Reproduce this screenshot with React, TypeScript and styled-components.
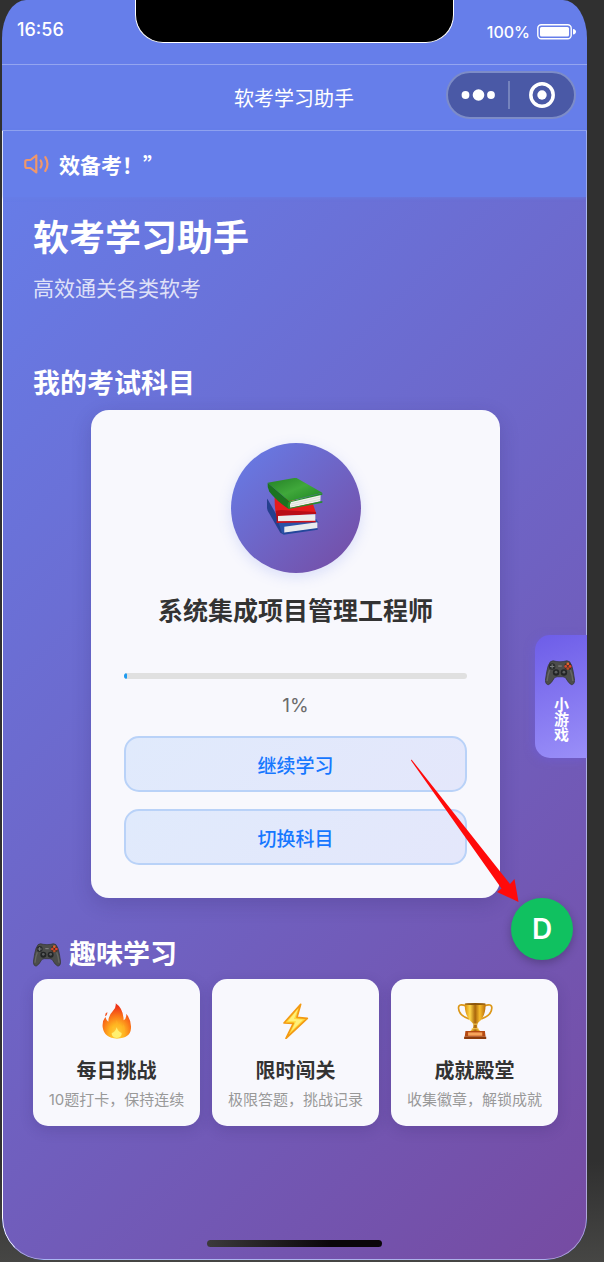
import React from "react";
import styled, { createGlobalStyle } from "styled-components";

const GlobalStyle = createGlobalStyle`
  * { box-sizing: border-box; }
  body {
    margin: 0;
    background: #303030;
    font-family: Inter, "Noto Sans CJK SC", sans-serif;
    color: #fff;
  }
  button { font: inherit; color: inherit; border: 0; padding: 0; background: none; cursor: pointer; }
  h1, h2, h3, p { margin: 0; }
  svg { display: block; }
`;

const Desk = styled.div`
  display: flex;
  min-height: 100vh;
  padding: 0 17px 2px 2px;
  background: linear-gradient(#303030 92%, #464644);
`;

const Phone = styled.div`
  position: relative;
  flex: 1;
  display: flex;
  flex-direction: column;
  overflow: hidden;
  background: #667eea;
  border-radius: 24px 24px 42px 42px / 38px 38px 42px 42px;
`;

const StatusBar = styled.header`
  display: grid;
  grid-template-columns: 1fr 54.4% 1fr;
  height: 65px;
  border-bottom: 1px solid rgba(255, 255, 255, 0.3);
`;

const Clock = styled.time`
  padding: 19px 0 0 15px;
  font-size: 18px;
  line-height: 22px;
  font-weight: 500;
`;

const Notch = styled.div`
  height: 43px;
  background: #000;
  border: 1px solid #fff;
  border-top: 0;
  border-radius: 0 0 28px 28px;
`;

const Battery = styled.div`
  display: flex;
  justify-content: flex-end;
  gap: 7px;
  padding: 21px 10px 0 0;
  font-size: 16px;
  line-height: 22px;
  font-weight: 500;
`;

const NavBar = styled.nav`
  display: grid;
  grid-template-columns: 1fr auto 1fr;
  align-items: center;
  height: 66px;
  padding: 0 11px 0 10px;
  border-bottom: 1px solid rgba(255, 255, 255, 0.3);
`;

const NavTitle = styled.span`
  grid-column: 2;
  padding-top: 2px;
  font-size: 20px;
  line-height: 28px;
`;

const Capsule = styled.div`
  justify-self: end;
  display: flex;
  align-items: center;
  width: 130px;
  height: 48px;
  margin-bottom: 6px;
  padding-right: 2px;
  border: 2px solid #7d8cc8;
  border-radius: 24px;
  background: #4a59a6;
`;

const CapsuleButton = styled.button`
  flex: 1;
  display: flex;
  justify-content: center;
  & + & { position: relative; padding-left: 4px; }
  & + &::before {
    content: "";
    position: absolute;
    left: 0;
    top: 0;
    bottom: 0;
    width: 2px;
    background: #7583bd;
  }
`;

const Screen = styled.main`
  flex: 1;
  display: flex;
  flex-direction: column;
  border: 1px solid rgba(255, 255, 255, 0.45);
  border-left-color: #fff;
  border-top: 0;
  border-radius: 0 0 42px 42px;
  background: linear-gradient(135deg, #667eea, #764ba2);
`;

const Notice = styled.div`
  display: flex;
  align-items: center;
  gap: 9px;
  height: 66px;
  padding: 0 21px;
  background: #667eea;
  box-shadow: 0 1px 3px rgba(102, 126, 234, 0.6);
  font-family: "Noto Sans CJK SC", sans-serif;
  font-size: 21px;
  line-height: 30px;
  font-weight: 700;
`;

const Content = styled.div`
  padding: 16px 28px 40px 30px;
`;

const Title = styled.h1`
  font-size: 36px;
  line-height: 50px;
  font-weight: 700;
`;

const Subtitle = styled.p`
  margin-top: 11px;
  font-size: 21px;
  line-height: 30px;
  color: rgba(255, 255, 255, 0.8);
`;

const SectionTitle = styled.h2<{ $gap: number }>`
  display: flex;
  align-items: center;
  gap: 8px;
  margin-top: ${(p) => p.$gap}px;
  font-size: 27px;
  line-height: 36px;
  font-weight: 700;
`;

const SubjectCard = styled.section`
  width: 78%;
  margin: 8px auto 0;
  padding: 33px;
  border-radius: 18px;
  background: #f8f8fd;
  box-shadow: 0 6px 20px rgba(40, 30, 90, 0.2);
  text-align: center;
`;

const Emblem = styled.div`
  display: flex;
  align-items: center;
  justify-content: center;
  width: 130px;
  height: 130px;
  margin: 0 auto;
  border-radius: 50%;
  background: linear-gradient(135deg, #667eea, #764ba2);
  box-shadow: 0 4px 14px rgba(102, 126, 234, 0.2);
`;

const SubjectName = styled.h3`
  margin-top: 20px;
  font-size: 25px;
  line-height: 36px;
  font-weight: 700;
  color: #333;
  white-space: nowrap;
`;

const Track = styled.div`
  height: 6px;
  margin-top: 44px;
  border-radius: 3px;
  background: #e0e0e0;
  overflow: hidden;
`;

const Fill = styled.div`
  height: 100%;
  border-radius: 3px;
  background: #1e9bf0;
`;

const Percent = styled.p`
  margin-top: 14px;
  font-size: 19px;
  line-height: 26px;
  color: #6b6b6b;
`;

const Action = styled.button`
  display: block;
  width: 100%;
  height: 56px;
  margin-top: 17px;
  padding-top: 6px;
  border: 2px solid #b9d2f8;
  border-radius: 15px;
  background: linear-gradient(135deg, #e0eafc, #e4e7fb);
  font-size: 19px;
  line-height: 28px;
  font-weight: 500;
  color: #1677ff;
`;

const Games = styled.div`
  display: grid;
  grid-template-columns: repeat(3, 1fr);
  gap: 12px;
  margin-top: 6px;
`;

const GameCard = styled.button`
  display: flex;
  flex-direction: column;
  align-items: center;
  padding: 24px 0 16px;
  border-radius: 15px;
  background: #f8f8fd;
  box-shadow: 0 4px 14px rgba(40, 30, 90, 0.18);
  white-space: nowrap;
`;

const GameName = styled.span`
  margin-top: 18px;
  font-size: 20px;
  line-height: 28px;
  font-weight: 700;
  color: #333;
`;

const GameNote = styled.span`
  margin-top: 5px;
  font-size: 15px;
  line-height: 20px;
  color: #999;
`;

const HomeIndicator = styled.div`
  width: 30%;
  height: 7px;
  margin: auto auto 12px;
  border-radius: 4px;
  background: linear-gradient(90deg, #3c3a3c, #0a060a 70%);
`;

const SideTab = styled.button`
  position: absolute;
  right: 0;
  top: 635px;
  display: flex;
  flex-direction: column;
  align-items: center;
  gap: 11px;
  width: 52px;
  height: 123px;
  padding: 25px 2px 0 0;
  border-radius: 15px 0 0 15px;
  background: linear-gradient(160deg, #6d5de8, #9a8ff8);
  box-shadow: -2px 2px 10px rgba(108, 92, 231, 0.4);
  font-size: 15px;
  line-height: 18px;
  font-weight: 700;
`;

const Vertical = styled.span`
  writing-mode: vertical-rl;
`;

const DebugButton = styled.button`
  position: absolute;
  right: 14px;
  top: 898px;
  width: 62px;
  height: 62px;
  border-radius: 50%;
  background: #10c160;
  box-shadow: 0 3px 10px rgba(0, 0, 0, 0.25);
  font-size: 28px;
  line-height: 62px;
  font-weight: 600;
`;

const Arrow = styled.svg`
  position: absolute;
  right: 68px;
  top: 759px;
  pointer-events: none;
`;

const Speaker = () => (
  <svg width="26" height="20" viewBox="0 0 26 20" fill="none" stroke="#f0976a" strokeWidth="2.200" strokeLinecap="round" strokeLinejoin="round">
    <path d="M12.3 1.5v17L6.5 14H3Q1.300 14 1.300 12.300V7.700Q1.300 6 3 6h3.500Z" />
    <path d="M16.600 6.500q2.200 3.500 0 7M21.300 3.200q4.400 6.800 0 13.600" />
  </svg>
);

const BatterySvg = styled.svg`
  margin-top: 3px;
`;

const BatteryIcon = () => (
  <BatterySvg width="40" height="16" viewBox="0 0 40 16">
    <rect x=".8" y=".8" width="33.400" height="13.900" rx="3.500" fill="none" stroke="#fff" strokeWidth="1.400" />
    <rect x="3" y="3" width="29" height="9.600" rx="1.500" fill="#fff" />
    <path d="M36 5q3 .5 3 2.800T36 10.600Z" fill="#fff" />
  </BatterySvg>
);

const Dots = () => (
  <svg width="34" height="12" viewBox="0 0 34 12" fill="#fff">
    <circle cx="4.500" cy="6" r="3.900" />
    <circle cx="17.500" cy="6" r="5.800" />
    <circle cx="30" cy="6" r="3.900" />
  </svg>
);

const Target = () => (
  <svg width="28" height="28" viewBox="0 0 28 28">
    <circle cx="14" cy="14" r="11.200" fill="none" stroke="#fff" strokeWidth="3.500" />
    <circle cx="14" cy="14" r="4.700" fill="#fff" />
  </svg>
);

const Books = () => (
  <svg width="57" height="60" viewBox="202 172 171 180">
    <defs>
      <linearGradient id="cover" x1="0" y1="0" x2="1" y2="1">
        <stop offset="0" stopColor="#237f25" />
        <stop offset=".5" stopColor="#40a83b" />
        <stop offset="1" stopColor="#1c8420" />
      </linearGradient>
    </defs>
    <path d="M203 234 248 313 250 341 242 336 204 270Q198 250 203 234Z" fill="#253f8e" />
    <path d="M236 304 350 296 357 306 255 320 254 341 247 338Z" fill="#2b53a8" />
    <path d="M254 318 353 305V324L254 337Z" fill="#e8ebee" />
    <path d="M250 336 354 322V327L251 342Z" fill="#23479b" />
    <path d="M225 228 338 245 350 279 232 287Q224 270 225 228Z" fill="#e51b1d" />
    <path d="M228 270 232 305 239 302V285L349 280V274L244 268Z" fill="#b90d16" />
    <path d="M235 286 347 281V301L235 303Z" fill="#eceeed" />
    <path d="M230 302 348 300V305L231 307Z" fill="#cf1219" />
    <path d="M204 186 289 171 368 216 268 242Z" fill="url(#cover)" />
    <path d="M204 186 268 242 267 265Q230 240 209 213Q202 200 204 186Z" fill="#1b731f" />
    <path d="M272 242 363 221 362 242 271 262Q267 252 272 242Z" fill="#f1f2ec" />
    <path d="M267 243 368 217V222L274 244Q269 252 272 261L368 241V246L267 265Q260 254 267 243Z" fill="#24902a" />
    <path d="M273 250 362 229M273 256 362 236" stroke="#c5c8c4" strokeWidth="1.500" />
  </svg>
);

const Gamepad = ({ size }: { size: number }) => (
  <svg width={size} height={(size * 24) / 28} viewBox="0 0 84 72">
    <path d="M15 5Q22 0 31 4 42 6 53 4 62 0 69 5 76 14 79 32L83 57Q82 70 74 69 67 67 57 49L50 47H34L27 49Q17 67 10 69 2 70 1 57L5 32Q8 14 15 5Z" fill="#4c4d4b" stroke="#323331" strokeWidth="2" />
    <path d="M13 28Q7 43 6 59M71 28Q77 43 78 59" fill="none" stroke="#666762" strokeWidth="4" />
    <circle cx="20" cy="18" r="9" fill="#2b2d2e" />
    <path d="M20 12v12M14 18h12" stroke="#777b7c" strokeWidth="3" />
    <circle cx="31" cy="35" r="9" fill="#232526" />
    <circle cx="53" cy="35" r="9" fill="#232526" />
    <circle cx="31" cy="34" r="4" fill="#5c5e5f" />
    <circle cx="53" cy="34" r="4" fill="#5c5e5f" />
    <circle cx="64" cy="18" r="10" fill="#403029" />
    <circle cx="64" cy="11" r="4" fill="#e2642f" />
    <circle cx="70" cy="18" r="4" fill="#ee3e25" />
    <circle cx="64" cy="24" r="4" fill="#b84c26" />
    <circle cx="58" cy="18" r="4" fill="#d34a2d" />
    <path d="M37 17h10" stroke="#888" strokeWidth="3" />
  </svg>
);

const Flame = () => (
  <svg width="30" height="36" viewBox="306 250 90 108">
    <defs>
      <radialGradient id="fire" cx=".5" cy=".85" r=".75">
        <stop offset="0" stopColor="#fff36b" />
        <stop offset=".3" stopColor="#ffbd22" />
        <stop offset=".65" stopColor="#fb7a18" />
        <stop offset="1" stopColor="#ee3519" />
      </radialGradient>
    </defs>
    <path d="M347 251Q370 266 371 302 380 296 379 282 395 303 393 326 391 356 351 357 313 356 308 323 306 304 316 292 319 302 325 306 325 288 338 275 349 265 347 251Z" fill="url(#fire)" />
    <path d="M322 277Q315 280 315 290 322 288 322 277Z" fill="#f35425" />
    <path d="M350 300Q354 316 365 325 367 319 371 314 381 335 369 350 351 360 333 350 322 338 331 319 336 325 339 326 348 316 350 300Z" fill="#ffb325" opacity=".55" />
    <path d="M350 323Q353 335 365 340 366 354 350 355 335 354 335 341 347 336 350 323Z" fill="#fff77a" opacity=".85" />
  </svg>
);

const Bolt = () => (
  <svg width="28" height="36" viewBox="22 13 84 108">
    <path d="M78 17 28 73 56 74 34 119 98 59 67 56Z" fill="#ffd83c" stroke="#f39a13" strokeWidth="5" strokeLinejoin="round" />
    <path d="M70 30 40 68 64 68 50 97 85 63 58 61Z" fill="#fff07a" />
  </svg>
);

const Trophy = () => (
  <svg width="36" height="36" viewBox="466 248 108 109">
    <defs>
      <linearGradient id="gold" x1="0" x2="1">
        <stop offset="0" stopColor="#d98c0c" />
        <stop offset=".25" stopColor="#ffd84a" />
        <stop offset=".5" stopColor="#a9660b" />
        <stop offset=".72" stopColor="#f8bd2c" />
        <stop offset="1" stopColor="#b86c09" />
      </linearGradient>
    </defs>
    <path d="M493 257Q470 248 470 263 471 286 502 296M548 257Q571 248 571 263 570 286 539 296" fill="none" stroke="#dc9717" strokeWidth="5" />
    <path d="M489 250H552Q553 290 530 307 524 314 528 325L538 335H503L513 325Q518 313 511 307 488 288 489 250Z" fill="url(#gold)" />
    <ellipse cx="520.500" cy="251" rx="31.500" ry="3" fill="#8d5609" />
    <path d="M514 312H527M510 326H531" stroke="#ffd35b" strokeWidth="3" />
    <path d="M491 333H550L552 350H489Z" fill="#b64a12" />
    <path d="M499 337H542V347H499Z" fill="#f6a45b" />
    <path d="M487 350H554V357H487Z" fill="#8c3b0b" />
  </svg>
);

const games = [
  { name: "每日挑战", note: "10题打卡，保持连续", icon: <Flame /> },
  { name: "限时闯关", note: "极限答题，挑战记录", icon: <Bolt /> },
  { name: "成就殿堂", note: "收集徽章，解锁成就", icon: <Trophy /> },
];

const progress = 1;

export default function App() {
  return (
    <Desk lang="zh-CN">
      <GlobalStyle />
      <Phone>
        <StatusBar>
          <Clock>16:56</Clock>
          <Notch />
          <Battery>
            <span>100%</span>
            <BatteryIcon />
          </Battery>
        </StatusBar>
        <NavBar>
          <NavTitle>软考学习助手</NavTitle>
          <Capsule>
            <CapsuleButton aria-label="更多"><Dots /></CapsuleButton>
            <CapsuleButton aria-label="关闭"><Target /></CapsuleButton>
          </Capsule>
        </NavBar>
        <Screen>
          <Notice>
            <Speaker />
            <span>效备考！”</span>
          </Notice>
          <Content>
            <Title>软考学习助手</Title>
            <Subtitle>高效通关各类软考</Subtitle>
            <SectionTitle $gap={62}>我的考试科目</SectionTitle>
            <SubjectCard>
              <Emblem><Books /></Emblem>
              <SubjectName>系统集成项目管理工程师</SubjectName>
              <Track role="progressbar" aria-label="学习进度" aria-valuenow={progress}>
                <Fill style={{ width: `${progress}%` }} />
              </Track>
              <Percent>{progress}%</Percent>
              <Action>继续学习</Action>
              <Action>切换科目</Action>
            </SubjectCard>
            <SectionTitle $gap={39}>
              <Gamepad size={28} />
              趣味学习
            </SectionTitle>
            <Games>
              {games.map((game) => (
                <GameCard key={game.name}>
                  {game.icon}
                  <GameName>{game.name}</GameName>
                  <GameNote>{game.note}</GameNote>
                </GameCard>
              ))}
            </Games>
          </Content>
          <HomeIndicator />
        </Screen>
        <SideTab>
          <Gamepad size={30} />
          <Vertical>小游戏</Vertical>
        </SideTab>
        <DebugButton>D</DebugButton>
        <Arrow width="108" height="144" viewBox="0 0 108 144">
          <path d="M.500 .500 99 125 103.500 120 107.500 143 86 133 90.500 129.500 0 1.500Z" fill="#ff0a0a" />
        </Arrow>
      </Phone>
    </Desk>
  );
}
